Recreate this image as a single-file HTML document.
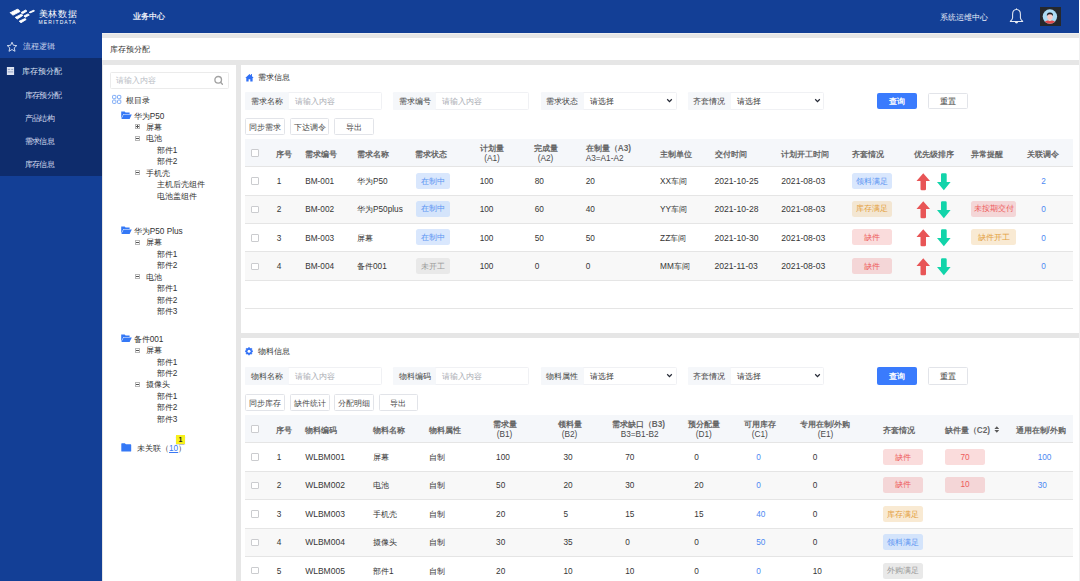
<!DOCTYPE html><html><head><meta charset="utf-8"><style>
html,body{margin:0;padding:0;}
body{width:1080px;height:581px;overflow:hidden;position:relative;background:#f0f0f0;font-family:"Liberation Sans",sans-serif;}
.t{position:absolute;white-space:nowrap;line-height:11px;}
.r{position:absolute;}
svg{position:absolute;overflow:visible;}
</style></head><body>
<div class="r" style="left:102.00px;top:33.00px;width:977.00px;height:548.00px;background:#e6e6e6;"></div>
<div class="r" style="left:0.00px;top:0.00px;width:1079.00px;height:33.00px;background:#133f96;"></div>
<div class="r" style="left:1079.00px;top:0.00px;width:1.00px;height:33.00px;background:#fff;"></div>
<div class="r" style="left:0.00px;top:33.00px;width:102.00px;height:548.00px;background:#133f96;"></div>
<div class="r" style="left:0.00px;top:58.00px;width:102.00px;height:117.50px;background:#0e2c6c;"></div>
<div class="r" style="left:102.00px;top:33.00px;width:977.00px;height:1.00px;background:#f0f0f0;"></div>
<div class="r" style="left:102.00px;top:37.70px;width:977.00px;height:22.00px;background:#fff;"></div>
<div class="t" style="left:109.70px;top:43.90px;color:#333;font-size:8.25px;">库存预分配</div>
<div class="r" style="left:102.50px;top:64.80px;width:133.70px;height:516.20px;background:#fff;"></div>
<div class="r" style="left:240.50px;top:64.80px;width:838.50px;height:268.20px;background:#fff;"></div>
<div class="r" style="left:240.50px;top:338.00px;width:838.50px;height:243.00px;background:#fff;"></div>
<svg style="left:0;top:0" width="40" height="30" viewBox="0 0 40 30">
<g fill="#fff" stroke="#fff" stroke-width="0.9" stroke-linejoin="round">
<polygon points="10.2,12.6 11.4,12.2 17.3,9.3 18.4,9.5 20.0,11.5 13.1,15.1 12.0,14.5"/>
<polygon points="21.1,12.5 25.6,10.1 26.9,11.1 22.5,13.8"/>
<polygon points="29.2,12.3 33.7,10.2 34.5,11.0 30.0,12.9"/>
<polygon points="15.2,17.4 21.3,14.2 22.8,15.4 17.3,19.0"/>
<polygon points="23.9,16.0 28.1,13.9 29.3,15.0 25.3,17.3"/>
<polygon points="19.2,21.2 25.0,18.6 26.2,19.5 21.0,22.7"/>
</g></svg>
<div class="t" style="left:38.6px;top:8.2px;font-size:9px;line-height:12px;color:#fff;letter-spacing:0.75px;">美林数据</div>
<div class="t" style="left:38.6px;top:18.9px;font-size:5px;line-height:6px;color:#fff;letter-spacing:1.1px;">MERITDATA</div>
<div class="t" style="left:132.70px;top:10.90px;color:#e4e9f5;font-size:8.25px;font-weight:bold;">业务中心</div>
<div class="t" style="left:940.20px;top:12.10px;color:#e8edf8;font-size:8.25px;">系统运维中心</div>
<svg style="left:1008px;top:7px" width="17" height="19" viewBox="0 0 17 19">
<path d="M8.5 2.4 C5.7 2.4 4.6 4.6 4.6 7.2 L4.6 10.8 C4.6 12.4 3.4 13.4 2.3 14.4 L14.7 14.4 C13.6 13.4 12.4 12.4 12.4 10.8 L12.4 7.2 C12.4 4.6 11.3 2.4 8.5 2.4 Z" fill="none" stroke="#e6eaf2" stroke-width="1.05" stroke-linejoin="round"/>
<path d="M7.6 2.6 L8.5 0.9 L9.4 2.6 Z" fill="#e6eaf2"/>
<path d="M6.9 14.8 A1.6 1.6 0 0 0 10.1 14.8 Z" fill="#e6eaf2"/>
</svg>
<div class="r" style="left:1040.00px;top:7.40px;width:21.00px;height:18.40px;background:#26282c;"></div>
<svg style="left:1040px;top:7.4px" width="21" height="18.4" viewBox="0 0 21 18.4">
<defs><clipPath id="cc"><circle cx="9.9" cy="9.55" r="7.2"/></clipPath></defs>
<circle cx="9.9" cy="9.55" r="7.2" fill="#acdcf5"/>
<g clip-path="url(#cc)">
<path d="M3 18 Q3.6 13.4 9.9 13.2 Q16.2 13.4 16.8 18 Z" fill="#e04a4c"/>
<path d="M8.4 11.5 H11.4 V13.6 Q9.9 14.4 8.4 13.6 Z" fill="#d9e6dc"/>
<ellipse cx="9.95" cy="9.5" rx="2.8" ry="3.3" fill="#f4cbc6"/>
<path d="M6.9 9.2 Q6.4 5.4 9.95 5.5 Q13.5 5.4 13.0 9.2 Q12.6 7.1 9.95 7.2 Q7.3 7.1 6.9 9.2 Z" fill="#1d1d21"/>
</g></svg>
<svg style="left:6px;top:41px" width="12" height="12" viewBox="0 0 12 12">
<path d="M6 1.2 L7.4 4.3 L10.8 4.6 L8.2 6.9 L9 10.3 L6 8.5 L3 10.3 L3.8 6.9 L1.2 4.6 L4.6 4.3 Z" fill="none" stroke="#dfe6f5" stroke-width="0.9" stroke-linejoin="round"/>
</svg>
<div class="t" style="left:22.70px;top:41.40px;color:#c8d3ec;font-size:8.25px;">流程逻辑</div>
<svg style="left:6px;top:66px" width="10" height="10" viewBox="0 0 10 10">
<rect x="0.9" y="1" width="7.2" height="8" fill="#dfe5f2"/>
<path d="M1.8 3.4 H4.2 M5.2 3.4 H7.2 M1.8 5.9 H7.2" stroke="#7d8fb8" stroke-width="0.8"/>
</svg>
<div class="t" style="left:22.30px;top:66.40px;color:#dce3f2;font-size:8.25px;">库存预分配</div>
<div class="t" style="left:24.70px;top:90.40px;color:#d5dcef;font-size:8.25px;letter-spacing:-0.6px">库存预分配</div>
<div class="t" style="left:24.70px;top:113.40px;color:#d5dcef;font-size:8.25px;letter-spacing:-0.6px">产品结构</div>
<div class="t" style="left:24.70px;top:136.40px;color:#d5dcef;font-size:8.25px;letter-spacing:-0.6px">需求信息</div>
<div class="t" style="left:24.70px;top:159.40px;color:#d5dcef;font-size:8.25px;letter-spacing:-0.6px">库存信息</div>
<div class="r" style="left:110.00px;top:72.30px;width:119.00px;height:16.70px;background:#fff;border:1px solid #ebebeb;box-sizing:border-box;border-radius:1.5px;"></div>
<div class="t" style="left:115.70px;top:75.40px;color:#b8bcc4;font-size:8.25px;">请输入内容</div>
<svg style="left:213px;top:75px" width="12" height="12" viewBox="0 0 12 12">
<circle cx="5.2" cy="4.8" r="3.3" fill="none" stroke="#a2a2a2" stroke-width="1.35"/>
<path d="M7.6 7.3 L9.4 9.2" stroke="#a2a2a2" stroke-width="1.35" stroke-linecap="round"/>
</svg>
<svg style="left:111px;top:94px" width="12" height="11" viewBox="0 0 12 11">
<g fill="none" stroke="#78a8f6" stroke-width="0.95">
<rect x="1.6" y="1.4" width="3.3" height="3.3" rx="0.7"/>
<rect x="6.5" y="1.4" width="3.3" height="3.3" rx="0.7"/>
<rect x="1.6" y="6.1" width="3.3" height="3.3" rx="0.7"/>
<rect x="6.5" y="6.1" width="3.3" height="3.3" rx="0.7"/>
</g></svg>
<div class="t" style="left:125.70px;top:95.40px;color:#333;font-size:8.25px;">根目录</div>
<svg style="left:121px;top:111px" width="11" height="9" viewBox="0 0 11 9">
<path d="M0.2 0.4 H3.6 L4.6 1.4 H8.6 V3 H2.4 L0.2 7.6 Z" fill="#3478f6"/>
<path d="M2.6 3.6 H10.8 L8.6 8 H0.4 Z" fill="#3478f6"/>
</svg>
<div class="t" style="left:133.70px;top:111.40px;color:#333;font-size:8.25px;">华为P50</div>
<svg style="left:135px;top:124px" width="5" height="5" viewBox="0 0 5 5">
<rect x="0.5" y="0.5" width="4" height="4" fill="none" stroke="#b8b8b8" stroke-width="1"/>
<path d="M1 2.5 H4" stroke="#555" stroke-width="1"/><path d="M2.5 1 V4" stroke="#555" stroke-width="1"/></svg>
<div class="t" style="left:145.70px;top:122.40px;color:#333;font-size:8.25px;">屏幕</div>
<svg style="left:135px;top:136px" width="5" height="5" viewBox="0 0 5 5">
<rect x="0.5" y="0.5" width="4" height="4" fill="none" stroke="#b8b8b8" stroke-width="1"/>
<path d="M1 2.5 H4" stroke="#555" stroke-width="1"/></svg>
<div class="t" style="left:145.70px;top:133.40px;color:#333;font-size:8.25px;">电池</div>
<div class="t" style="left:156.70px;top:145.40px;color:#333;font-size:8.25px;">部件1</div>
<div class="t" style="left:156.70px;top:156.40px;color:#333;font-size:8.25px;">部件2</div>
<svg style="left:135px;top:170px" width="5" height="5" viewBox="0 0 5 5">
<rect x="0.5" y="0.5" width="4" height="4" fill="none" stroke="#b8b8b8" stroke-width="1"/>
<path d="M1 2.5 H4" stroke="#555" stroke-width="1"/></svg>
<div class="t" style="left:145.70px;top:168.40px;color:#333;font-size:8.25px;">手机壳</div>
<div class="t" style="left:156.70px;top:179.40px;color:#333;font-size:8.25px;">主机后壳组件</div>
<div class="t" style="left:156.70px;top:191.40px;color:#333;font-size:8.25px;">电池盖组件</div>
<svg style="left:121px;top:226px" width="11" height="9" viewBox="0 0 11 9">
<path d="M0.2 0.4 H3.6 L4.6 1.4 H8.6 V3 H2.4 L0.2 7.6 Z" fill="#3478f6"/>
<path d="M2.6 3.6 H10.8 L8.6 8 H0.4 Z" fill="#3478f6"/>
</svg>
<div class="t" style="left:133.70px;top:226.40px;color:#333;font-size:8.25px;">华为P50 Plus</div>
<svg style="left:135px;top:240px" width="5" height="5" viewBox="0 0 5 5">
<rect x="0.5" y="0.5" width="4" height="4" fill="none" stroke="#b8b8b8" stroke-width="1"/>
<path d="M1 2.5 H4" stroke="#555" stroke-width="1"/></svg>
<div class="t" style="left:145.70px;top:237.40px;color:#333;font-size:8.25px;">屏幕</div>
<div class="t" style="left:156.70px;top:248.90px;color:#333;font-size:8.25px;">部件1</div>
<div class="t" style="left:156.70px;top:260.40px;color:#333;font-size:8.25px;">部件2</div>
<svg style="left:135px;top:274px" width="5" height="5" viewBox="0 0 5 5">
<rect x="0.5" y="0.5" width="4" height="4" fill="none" stroke="#b8b8b8" stroke-width="1"/>
<path d="M1 2.5 H4" stroke="#555" stroke-width="1"/></svg>
<div class="t" style="left:145.70px;top:271.90px;color:#333;font-size:8.25px;">电池</div>
<div class="t" style="left:156.70px;top:283.40px;color:#333;font-size:8.25px;">部件1</div>
<div class="t" style="left:156.70px;top:294.90px;color:#333;font-size:8.25px;">部件2</div>
<div class="t" style="left:156.70px;top:306.40px;color:#333;font-size:8.25px;">部件3</div>
<svg style="left:121px;top:334px" width="11" height="9" viewBox="0 0 11 9">
<path d="M0.2 0.4 H3.6 L4.6 1.4 H8.6 V3 H2.4 L0.2 7.6 Z" fill="#3478f6"/>
<path d="M2.6 3.6 H10.8 L8.6 8 H0.4 Z" fill="#3478f6"/>
</svg>
<div class="t" style="left:133.70px;top:334.40px;color:#333;font-size:8.25px;">备件001</div>
<svg style="left:135px;top:348px" width="5" height="5" viewBox="0 0 5 5">
<rect x="0.5" y="0.5" width="4" height="4" fill="none" stroke="#b8b8b8" stroke-width="1"/>
<path d="M1 2.5 H4" stroke="#555" stroke-width="1"/></svg>
<div class="t" style="left:145.70px;top:345.40px;color:#333;font-size:8.25px;">屏幕</div>
<div class="t" style="left:156.70px;top:356.90px;color:#333;font-size:8.25px;">部件1</div>
<div class="t" style="left:156.70px;top:368.40px;color:#333;font-size:8.25px;">部件2</div>
<svg style="left:135px;top:382px" width="5" height="5" viewBox="0 0 5 5">
<rect x="0.5" y="0.5" width="4" height="4" fill="none" stroke="#b8b8b8" stroke-width="1"/>
<path d="M1 2.5 H4" stroke="#555" stroke-width="1"/></svg>
<div class="t" style="left:145.70px;top:379.40px;color:#333;font-size:8.25px;">摄像头</div>
<div class="t" style="left:156.70px;top:391.40px;color:#333;font-size:8.25px;">部件1</div>
<div class="t" style="left:156.70px;top:402.40px;color:#333;font-size:8.25px;">部件2</div>
<div class="t" style="left:156.70px;top:413.90px;color:#333;font-size:8.25px;">部件3</div>
<div class="r" style="left:176.00px;top:435.00px;width:9.00px;height:8.50px;background:#f7f01c;box-shadow:0 0.5px 1px rgba(0,0,0,0.25);"></div>
<div class="t" style="left:176px;width:9px;text-align:center;top:433.5px;font-size:7px;font-weight:bold;color:#222">1</div>
<svg style="left:121px;top:443px" width="11" height="9" viewBox="0 0 11 9">
<path d="M0.3 0.8 Q0.3 0.2 0.9 0.2 H3.8 L4.9 1.3 H9.6 Q10.2 1.3 10.2 1.9 V7.9 Q10.2 8.5 9.6 8.5 H0.9 Q0.3 8.5 0.3 7.9 Z" fill="#3478f6"/>
</svg>
<div class="t" style="left:137px;top:443px;color:#333;font-size:8.25px">未关联（<span style="color:#3a78f2;text-decoration:underline">10</span>）</div>
<svg style="left:245px;top:72.5px" width="9" height="9" viewBox="0 0 9 9">
<path d="M4.5 0.9 L0.3 4.9 L1.3 4.9 L1.3 8.6 L3.6 8.6 L3.6 6.3 L5.3 6.3 L5.3 8.6 L7.6 8.6 L7.6 4.9 L8.7 4.9 L7.0 3.2 L7.0 0.9 L6.1 0.9 L6.1 2.4 Z" fill="#2f6ff5"/>
</svg>
<div class="t" style="left:257.70px;top:71.90px;color:#333;font-size:8.25px;">需求信息</div>
<div class="r" style="left:245.00px;top:92.30px;width:136.50px;height:17.40px;background:#fff;border:1px solid #f0f1f4;box-sizing:border-box;border-radius:1.5px;"></div>
<div class="r" style="left:245.00px;top:92.30px;width:44.00px;height:17.40px;background:#f5f7fa;border-radius:1.5px;"></div>
<div class="t" style="left:245.00px;width:44.00px;text-align:center;top:95.75px;color:#444;font-size:8.25px;">需求名称</div>
<div class="t" style="left:294.70px;top:95.90px;color:#a9acb3;font-size:8.25px;">请输入内容</div>
<div class="r" style="left:393.00px;top:92.30px;width:135.50px;height:17.40px;background:#fff;border:1px solid #f0f1f4;box-sizing:border-box;border-radius:1.5px;"></div>
<div class="r" style="left:393.00px;top:92.30px;width:43.00px;height:17.40px;background:#f5f7fa;border-radius:1.5px;"></div>
<div class="t" style="left:393.00px;width:43.00px;text-align:center;top:95.75px;color:#444;font-size:8.25px;">需求编号</div>
<div class="t" style="left:441.70px;top:95.90px;color:#a9acb3;font-size:8.25px;">请输入内容</div>
<div class="r" style="left:540.50px;top:92.30px;width:136.00px;height:17.40px;background:#fff;border:1px solid #f0f1f4;box-sizing:border-box;border-radius:1.5px;"></div>
<div class="r" style="left:540.50px;top:92.30px;width:43.50px;height:17.40px;background:#f5f7fa;border-radius:1.5px;"></div>
<div class="t" style="left:540.50px;width:43.50px;text-align:center;top:95.75px;color:#444;font-size:8.25px;">需求状态</div>
<div class="t" style="left:590.20px;top:95.90px;color:#333;font-size:8.25px;">请选择</div>
<svg style="left:666px;top:98px" width="7" height="5" viewBox="0 0 7 5">
<path d="M1.2 1.3 L3.5 3.6 L5.8 1.3" fill="none" stroke="#262a36" stroke-width="1.25"/>
</svg>
<div class="r" style="left:687.50px;top:92.30px;width:136.30px;height:17.40px;background:#fff;border:1px solid #f0f1f4;box-sizing:border-box;border-radius:1.5px;"></div>
<div class="r" style="left:687.50px;top:92.30px;width:43.50px;height:17.40px;background:#f5f7fa;border-radius:1.5px;"></div>
<div class="t" style="left:687.50px;width:43.50px;text-align:center;top:95.75px;color:#444;font-size:8.25px;">齐套情况</div>
<div class="t" style="left:737.20px;top:95.90px;color:#333;font-size:8.25px;">请选择</div>
<svg style="left:814px;top:98px" width="7" height="5" viewBox="0 0 7 5">
<path d="M1.2 1.3 L3.5 3.6 L5.8 1.3" fill="none" stroke="#262a36" stroke-width="1.25"/>
</svg>
<div class="r" style="left:877.00px;top:93.00px;width:40.00px;height:15.80px;background:#3a7bfd;border-radius:2px;"></div>
<div class="t" style="left:877.00px;width:40.00px;text-align:center;top:96.05px;color:#fff;font-size:8.25px;font-weight:bold;">查询</div>
<div class="r" style="left:928.30px;top:93.00px;width:39.30px;height:15.80px;background:#fff;border:1px solid #e2e4e9;box-sizing:border-box;border-radius:1.5px;"></div>
<div class="t" style="left:928.30px;width:39.30px;text-align:center;top:96.25px;color:#333;font-size:8.25px;">重置</div>
<div class="r" style="left:245.00px;top:118.00px;width:39.50px;height:16.50px;background:#fff;border:1px solid #e2e4e9;box-sizing:border-box;border-radius:1.5px;"></div>
<div class="t" style="left:245.00px;width:39.50px;text-align:center;top:121.60px;color:#4a4a4a;font-size:8.25px;">同步需求</div>
<div class="r" style="left:290.00px;top:118.00px;width:39.20px;height:16.50px;background:#fff;border:1px solid #e2e4e9;box-sizing:border-box;border-radius:1.5px;"></div>
<div class="t" style="left:290.00px;width:39.20px;text-align:center;top:121.60px;color:#4a4a4a;font-size:8.25px;">下达调令</div>
<div class="r" style="left:334.00px;top:118.00px;width:39.50px;height:16.50px;background:#fff;border:1px solid #e2e4e9;box-sizing:border-box;border-radius:1.5px;"></div>
<div class="t" style="left:334.00px;width:39.50px;text-align:center;top:121.60px;color:#4a4a4a;font-size:8.25px;">导出</div>
<div class="r" style="left:245.00px;top:139.00px;width:828.00px;height:27.50px;background:#f5f7fa;"></div>
<div class="r" style="left:245.00px;top:166.00px;width:828.00px;height:1.00px;background:#e5e5e5;"></div>
<div class="r" style="left:251.20px;top:149.05px;width:7.60px;height:7.50px;background:#fff;border:1px solid #cbcccf;box-sizing:border-box;border-radius:1px;"></div>
<div class="t" style="left:276.20px;top:149.00px;color:#666666;font-size:8.25px;font-weight:bold;">序号</div>
<div class="t" style="left:305.20px;top:149.00px;color:#666666;font-size:8.25px;font-weight:bold;">需求编号</div>
<div class="t" style="left:357.00px;top:149.00px;color:#666666;font-size:8.25px;font-weight:bold;">需求名称</div>
<div class="t" style="left:415.30px;top:149.00px;color:#666666;font-size:8.25px;font-weight:bold;">需求状态</div>
<div class="t" style="left:660.10px;top:149.00px;color:#666666;font-size:8.25px;font-weight:bold;">主制单位</div>
<div class="t" style="left:714.50px;top:149.00px;color:#666666;font-size:8.25px;font-weight:bold;">交付时间</div>
<div class="t" style="left:781.30px;top:149.00px;color:#666666;font-size:8.25px;font-weight:bold;">计划开工时间</div>
<div class="t" style="left:851.70px;top:149.00px;color:#666666;font-size:8.25px;font-weight:bold;">齐套情况</div>
<div class="t" style="left:913.70px;top:149.00px;color:#666666;font-size:8.25px;font-weight:bold;">优先级排序</div>
<div class="t" style="left:970.70px;top:149.00px;color:#666666;font-size:8.25px;font-weight:bold;">异常提醒</div>
<div class="t" style="left:1026.70px;top:149.00px;color:#666666;font-size:8.25px;font-weight:bold;">关联调令</div>
<div class="t" style="left:479.70px;top:142.90px;color:#666666;font-size:8.25px;font-weight:bold;">计划量</div>
<div class="t" style="left:484.20px;top:152.90px;color:#4a4a4a;font-size:8.25px;">(A1)</div>
<div class="t" style="left:534.20px;top:142.90px;color:#666666;font-size:8.25px;font-weight:bold;">完成量</div>
<div class="t" style="left:537.70px;top:152.90px;color:#4a4a4a;font-size:8.25px;">(A2)</div>
<div class="t" style="left:585.70px;top:142.90px;color:#666666;font-size:8.25px;font-weight:bold;">在制量（A3)</div>
<div class="t" style="left:585.70px;top:152.90px;color:#4a4a4a;font-size:8.25px;">A3=A1-A2</div>
<div class="r" style="left:245.00px;top:194.70px;width:828.00px;height:1.00px;background:#e5e5e5;"></div>
<div class="r" style="left:251.20px;top:177.30px;width:7.60px;height:7.50px;background:#fff;border:1px solid #cbcccf;box-sizing:border-box;border-radius:1px;"></div>
<div class="t" style="left:276.70px;top:175.95px;color:#363636;font-size:8.25px;">1</div>
<div class="t" style="left:305.20px;top:175.95px;color:#363636;font-size:8.25px;">BM-001</div>
<div class="t" style="left:357.00px;top:175.95px;color:#363636;font-size:8.25px;">华为P50</div>
<div class="r" style="left:416.00px;top:173.35px;width:33.50px;height:16.00px;background:#d9e7fd;border-radius:2.5px;"></div>
<div class="t" style="left:416.00px;width:33.50px;text-align:center;top:176.10px;color:#5b95f2;font-size:8.25px;">在制中</div>
<div class="t" style="left:479.70px;top:175.95px;color:#363636;font-size:8.25px;">100</div>
<div class="t" style="left:534.70px;top:175.95px;color:#363636;font-size:8.25px;">80</div>
<div class="t" style="left:585.70px;top:175.95px;color:#363636;font-size:8.25px;">20</div>
<div class="t" style="left:660.10px;top:175.95px;color:#363636;font-size:8.25px;">XX车间</div>
<div class="t" style="left:714.50px;top:175.95px;color:#363636;font-size:8.6px;">2021-10-25</div>
<div class="t" style="left:781.30px;top:175.95px;color:#363636;font-size:8.6px;">2021-08-03</div>
<div class="r" style="left:852.00px;top:173.35px;width:40.00px;height:16.00px;background:#d9e7fd;border-radius:2.5px;"></div>
<div class="t" style="left:852.00px;width:40.00px;text-align:center;top:176.10px;color:#5b95f2;font-size:8.25px;">领料满足</div>
<svg style="left:916px;top:172.55px" width="36" height="18" viewBox="0 0 36 18">
<path d="M7.25 0.3 L14 7.9 L10.0 7.9 L10.0 15.9 Q10.0 17.2 8.7 17.2 L5.8 17.2 Q4.5 17.2 4.5 15.9 L4.5 7.9 L0.5 7.9 Z" fill="#e85556"/>
<path d="M26.3 0.3 L29.4 0.3 Q30.7 0.3 30.7 1.6 L30.7 9.0 L34.6 9.0 L27.85 17.3 L21.0 9.0 L25.0 9.0 L25.0 1.6 Q25.0 0.3 26.3 0.3 Z" fill="#12d4aa"/>
</svg>
<div class="t" style="left:1041.20px;top:175.95px;color:#4d89f2;font-size:8.25px;">2</div>
<div class="r" style="left:245.00px;top:195.70px;width:828.00px;height:27.30px;background:#f8f8f8;"></div>
<div class="r" style="left:245.00px;top:223.00px;width:828.00px;height:1.00px;background:#e5e5e5;"></div>
<div class="r" style="left:251.20px;top:205.80px;width:7.60px;height:7.50px;background:#fff;border:1px solid #cbcccf;box-sizing:border-box;border-radius:1px;"></div>
<div class="t" style="left:276.70px;top:204.45px;color:#363636;font-size:8.25px;">2</div>
<div class="t" style="left:305.20px;top:204.45px;color:#363636;font-size:8.25px;">BM-002</div>
<div class="t" style="left:357.00px;top:204.45px;color:#363636;font-size:8.25px;">华为P50plus</div>
<div class="r" style="left:416.00px;top:200.55px;width:33.50px;height:16.00px;background:#d4e4fb;border-radius:2.5px;"></div>
<div class="t" style="left:416.00px;width:33.50px;text-align:center;top:203.30px;color:#5b95f2;font-size:8.25px;">在制中</div>
<div class="t" style="left:479.70px;top:204.45px;color:#363636;font-size:8.25px;">100</div>
<div class="t" style="left:534.70px;top:204.45px;color:#363636;font-size:8.25px;">60</div>
<div class="t" style="left:585.70px;top:204.45px;color:#363636;font-size:8.25px;">40</div>
<div class="t" style="left:660.10px;top:204.45px;color:#363636;font-size:8.25px;">YY车间</div>
<div class="t" style="left:714.50px;top:204.45px;color:#363636;font-size:8.6px;">2021-10-28</div>
<div class="t" style="left:781.30px;top:204.45px;color:#363636;font-size:8.6px;">2021-08-03</div>
<div class="r" style="left:852.00px;top:200.55px;width:40.00px;height:16.00px;background:#f3e6d2;border-radius:2.5px;"></div>
<div class="t" style="left:852.00px;width:40.00px;text-align:center;top:203.30px;color:#e3a040;font-size:8.25px;">库存满足</div>
<svg style="left:916px;top:201.05px" width="36" height="18" viewBox="0 0 36 18">
<path d="M7.25 0.3 L14 7.9 L10.0 7.9 L10.0 15.9 Q10.0 17.2 8.7 17.2 L5.8 17.2 Q4.5 17.2 4.5 15.9 L4.5 7.9 L0.5 7.9 Z" fill="#e85556"/>
<path d="M26.3 0.3 L29.4 0.3 Q30.7 0.3 30.7 1.6 L30.7 9.0 L34.6 9.0 L27.85 17.3 L21.0 9.0 L25.0 9.0 L25.0 1.6 Q25.0 0.3 26.3 0.3 Z" fill="#12d4aa"/>
</svg>
<div class="r" style="left:971.20px;top:200.55px;width:45.10px;height:16.00px;background:#f4d6d7;border-radius:2.5px;"></div>
<div class="t" style="left:971.20px;width:45.10px;text-align:center;top:203.30px;color:#ee5b5b;font-size:8.25px;">未按期交付</div>
<div class="t" style="left:1041.20px;top:204.45px;color:#4d89f2;font-size:8.25px;">0</div>
<div class="r" style="left:245.00px;top:251.30px;width:828.00px;height:1.00px;background:#e5e5e5;"></div>
<div class="r" style="left:251.20px;top:234.10px;width:7.60px;height:7.50px;background:#fff;border:1px solid #cbcccf;box-sizing:border-box;border-radius:1px;"></div>
<div class="t" style="left:276.70px;top:232.75px;color:#363636;font-size:8.25px;">3</div>
<div class="t" style="left:305.20px;top:232.75px;color:#363636;font-size:8.25px;">BM-003</div>
<div class="t" style="left:357.00px;top:232.75px;color:#363636;font-size:8.25px;">屏幕</div>
<div class="r" style="left:416.00px;top:229.35px;width:33.50px;height:16.00px;background:#d9e7fd;border-radius:2.5px;"></div>
<div class="t" style="left:416.00px;width:33.50px;text-align:center;top:232.10px;color:#5b95f2;font-size:8.25px;">在制中</div>
<div class="t" style="left:479.70px;top:232.75px;color:#363636;font-size:8.25px;">100</div>
<div class="t" style="left:534.70px;top:232.75px;color:#363636;font-size:8.25px;">50</div>
<div class="t" style="left:585.70px;top:232.75px;color:#363636;font-size:8.25px;">50</div>
<div class="t" style="left:660.10px;top:232.75px;color:#363636;font-size:8.25px;">ZZ车间</div>
<div class="t" style="left:714.50px;top:232.75px;color:#363636;font-size:8.6px;">2021-10-30</div>
<div class="t" style="left:781.30px;top:232.75px;color:#363636;font-size:8.6px;">2021-08-03</div>
<div class="r" style="left:852.00px;top:229.35px;width:40.00px;height:16.00px;background:#fadcdc;border-radius:2.5px;"></div>
<div class="t" style="left:852.00px;width:40.00px;text-align:center;top:232.10px;color:#ee5b5b;font-size:8.25px;">缺件</div>
<svg style="left:916px;top:229.35px" width="36" height="18" viewBox="0 0 36 18">
<path d="M7.25 0.3 L14 7.9 L10.0 7.9 L10.0 15.9 Q10.0 17.2 8.7 17.2 L5.8 17.2 Q4.5 17.2 4.5 15.9 L4.5 7.9 L0.5 7.9 Z" fill="#e85556"/>
<path d="M26.3 0.3 L29.4 0.3 Q30.7 0.3 30.7 1.6 L30.7 9.0 L34.6 9.0 L27.85 17.3 L21.0 9.0 L25.0 9.0 L25.0 1.6 Q25.0 0.3 26.3 0.3 Z" fill="#12d4aa"/>
</svg>
<div class="r" style="left:971.20px;top:229.35px;width:45.10px;height:16.00px;background:#f9ead3;border-radius:2.5px;"></div>
<div class="t" style="left:971.20px;width:45.10px;text-align:center;top:232.10px;color:#e3a040;font-size:8.25px;">缺件开工</div>
<div class="t" style="left:1041.20px;top:232.75px;color:#4d89f2;font-size:8.25px;">0</div>
<div class="r" style="left:245.00px;top:252.30px;width:828.00px;height:27.50px;background:#f8f8f8;"></div>
<div class="r" style="left:245.00px;top:279.80px;width:828.00px;height:1.00px;background:#e5e5e5;"></div>
<div class="r" style="left:251.20px;top:262.50px;width:7.60px;height:7.50px;background:#fff;border:1px solid #cbcccf;box-sizing:border-box;border-radius:1px;"></div>
<div class="t" style="left:276.70px;top:261.15px;color:#363636;font-size:8.25px;">4</div>
<div class="t" style="left:305.20px;top:261.15px;color:#363636;font-size:8.25px;">BM-004</div>
<div class="t" style="left:357.00px;top:261.15px;color:#363636;font-size:8.25px;">备件001</div>
<div class="r" style="left:416.00px;top:258.05px;width:33.50px;height:16.00px;background:#e9e9e9;border-radius:2.5px;"></div>
<div class="t" style="left:416.00px;width:33.50px;text-align:center;top:260.80px;color:#9a9a9a;font-size:8.25px;">未开工</div>
<div class="t" style="left:479.70px;top:261.15px;color:#363636;font-size:8.25px;">100</div>
<div class="t" style="left:534.70px;top:261.15px;color:#363636;font-size:8.25px;">0</div>
<div class="t" style="left:585.70px;top:261.15px;color:#363636;font-size:8.25px;">0</div>
<div class="t" style="left:660.10px;top:261.15px;color:#363636;font-size:8.25px;">MM车间</div>
<div class="t" style="left:714.50px;top:261.15px;color:#363636;font-size:8.6px;">2021-11-03</div>
<div class="t" style="left:781.30px;top:261.15px;color:#363636;font-size:8.6px;">2021-08-03</div>
<div class="r" style="left:852.00px;top:258.05px;width:40.00px;height:16.00px;background:#f4d6d7;border-radius:2.5px;"></div>
<div class="t" style="left:852.00px;width:40.00px;text-align:center;top:260.80px;color:#ee5b5b;font-size:8.25px;">缺件</div>
<svg style="left:916px;top:257.75px" width="36" height="18" viewBox="0 0 36 18">
<path d="M7.25 0.3 L14 7.9 L10.0 7.9 L10.0 15.9 Q10.0 17.2 8.7 17.2 L5.8 17.2 Q4.5 17.2 4.5 15.9 L4.5 7.9 L0.5 7.9 Z" fill="#e85556"/>
<path d="M26.3 0.3 L29.4 0.3 Q30.7 0.3 30.7 1.6 L30.7 9.0 L34.6 9.0 L27.85 17.3 L21.0 9.0 L25.0 9.0 L25.0 1.6 Q25.0 0.3 26.3 0.3 Z" fill="#12d4aa"/>
</svg>
<div class="t" style="left:1041.20px;top:261.15px;color:#4d89f2;font-size:8.25px;">0</div>
<div class="r" style="left:245.00px;top:308.00px;width:828.00px;height:1.00px;background:#e5e5e5;"></div>
<svg style="left:245px;top:347px" width="9" height="9" viewBox="0 0 9 9">
<polygon points="4.00,0.25 5.11,1.57 6.83,1.42 6.68,3.14 8.00,4.25 6.68,5.36 6.83,7.08 5.11,6.93 4.00,8.25 2.89,6.93 1.17,7.08 1.32,5.36 0.00,4.25 1.32,3.14 1.17,1.42 2.89,1.57" fill="#2f6ff5" stroke="#2f6ff5" stroke-width="0.6" stroke-linejoin="round"/>
<circle cx="4.0" cy="4.25" r="1.5" fill="#fff"/>
</svg>
<div class="t" style="left:257.70px;top:346.40px;color:#333;font-size:8.25px;">物料信息</div>
<div class="r" style="left:245.00px;top:367.00px;width:136.50px;height:17.60px;background:#fff;border:1px solid #f0f1f4;box-sizing:border-box;border-radius:1.5px;"></div>
<div class="r" style="left:245.00px;top:367.00px;width:44.00px;height:17.60px;background:#f5f7fa;border-radius:1.5px;"></div>
<div class="t" style="left:245.00px;width:44.00px;text-align:center;top:370.55px;color:#444;font-size:8.25px;">物料名称</div>
<div class="t" style="left:294.70px;top:370.70px;color:#a9acb3;font-size:8.25px;">请输入内容</div>
<div class="r" style="left:393.00px;top:367.00px;width:135.50px;height:17.60px;background:#fff;border:1px solid #f0f1f4;box-sizing:border-box;border-radius:1.5px;"></div>
<div class="r" style="left:393.00px;top:367.00px;width:43.00px;height:17.60px;background:#f5f7fa;border-radius:1.5px;"></div>
<div class="t" style="left:393.00px;width:43.00px;text-align:center;top:370.55px;color:#444;font-size:8.25px;">物料编码</div>
<div class="t" style="left:441.70px;top:370.70px;color:#a9acb3;font-size:8.25px;">请输入内容</div>
<div class="r" style="left:540.50px;top:367.00px;width:136.00px;height:17.60px;background:#fff;border:1px solid #f0f1f4;box-sizing:border-box;border-radius:1.5px;"></div>
<div class="r" style="left:540.50px;top:367.00px;width:43.50px;height:17.60px;background:#f5f7fa;border-radius:1.5px;"></div>
<div class="t" style="left:540.50px;width:43.50px;text-align:center;top:370.55px;color:#444;font-size:8.25px;">物料属性</div>
<div class="t" style="left:590.20px;top:370.70px;color:#333;font-size:8.25px;">请选择</div>
<svg style="left:666px;top:373px" width="7" height="5" viewBox="0 0 7 5">
<path d="M1.2 1.3 L3.5 3.6 L5.8 1.3" fill="none" stroke="#262a36" stroke-width="1.25"/>
</svg>
<div class="r" style="left:687.50px;top:367.00px;width:136.30px;height:17.60px;background:#fff;border:1px solid #f0f1f4;box-sizing:border-box;border-radius:1.5px;"></div>
<div class="r" style="left:687.50px;top:367.00px;width:43.50px;height:17.60px;background:#f5f7fa;border-radius:1.5px;"></div>
<div class="t" style="left:687.50px;width:43.50px;text-align:center;top:370.55px;color:#444;font-size:8.25px;">齐套情况</div>
<div class="t" style="left:737.20px;top:370.70px;color:#333;font-size:8.25px;">请选择</div>
<svg style="left:814px;top:373px" width="7" height="5" viewBox="0 0 7 5">
<path d="M1.2 1.3 L3.5 3.6 L5.8 1.3" fill="none" stroke="#262a36" stroke-width="1.25"/>
</svg>
<div class="r" style="left:877.00px;top:366.80px;width:40.00px;height:17.90px;background:#3a7bfd;border-radius:2px;"></div>
<div class="t" style="left:877.00px;width:40.00px;text-align:center;top:370.90px;color:#fff;font-size:8.25px;font-weight:bold;">查询</div>
<div class="r" style="left:928.00px;top:366.80px;width:39.60px;height:17.90px;background:#fff;border:1px solid #e2e4e9;box-sizing:border-box;border-radius:1.5px;"></div>
<div class="t" style="left:928.00px;width:39.60px;text-align:center;top:371.10px;color:#333;font-size:8.25px;">重置</div>
<div class="r" style="left:245.00px;top:394.00px;width:39.50px;height:16.50px;background:#fff;border:1px solid #e2e4e9;box-sizing:border-box;border-radius:1.5px;"></div>
<div class="t" style="left:245.00px;width:39.50px;text-align:center;top:397.60px;color:#4a4a4a;font-size:8.25px;">同步库存</div>
<div class="r" style="left:290.00px;top:394.00px;width:39.50px;height:16.50px;background:#fff;border:1px solid #e2e4e9;box-sizing:border-box;border-radius:1.5px;"></div>
<div class="t" style="left:290.00px;width:39.50px;text-align:center;top:397.60px;color:#4a4a4a;font-size:8.25px;">缺件统计</div>
<div class="r" style="left:334.00px;top:394.00px;width:39.50px;height:16.50px;background:#fff;border:1px solid #e2e4e9;box-sizing:border-box;border-radius:1.5px;"></div>
<div class="t" style="left:334.00px;width:39.50px;text-align:center;top:397.60px;color:#4a4a4a;font-size:8.25px;">分配明细</div>
<div class="r" style="left:378.50px;top:394.00px;width:39.00px;height:16.50px;background:#fff;border:1px solid #e2e4e9;box-sizing:border-box;border-radius:1.5px;"></div>
<div class="t" style="left:378.50px;width:39.00px;text-align:center;top:397.60px;color:#4a4a4a;font-size:8.25px;">导出</div>
<div class="r" style="left:245.00px;top:415.00px;width:828.00px;height:27.50px;background:#f5f7fa;"></div>
<div class="r" style="left:245.00px;top:442.00px;width:828.00px;height:1.00px;background:#e5e5e5;"></div>
<div class="r" style="left:251.20px;top:425.05px;width:7.60px;height:7.50px;background:#fff;border:1px solid #cbcccf;box-sizing:border-box;border-radius:1px;"></div>
<div class="t" style="left:276.30px;top:425.00px;color:#666666;font-size:8.25px;font-weight:bold;">序号</div>
<div class="t" style="left:305.20px;top:425.00px;color:#666666;font-size:8.25px;font-weight:bold;">物料编码</div>
<div class="t" style="left:373.20px;top:425.00px;color:#666666;font-size:8.25px;font-weight:bold;">物料名称</div>
<div class="t" style="left:429.00px;top:425.00px;color:#666666;font-size:8.25px;font-weight:bold;">物料属性</div>
<div class="t" style="left:882.50px;top:425.00px;color:#666666;font-size:8.25px;font-weight:bold;">齐套情况</div>
<div class="t" style="left:1015.50px;top:425.00px;color:#666666;font-size:8.25px;font-weight:bold;">通用在制/外购</div>
<div class="t" style="left:492.70px;top:418.90px;color:#666666;font-size:8.25px;font-weight:bold;">需求量</div>
<div class="t" style="left:496.70px;top:428.90px;color:#4a4a4a;font-size:8.25px;">(B1)</div>
<div class="t" style="left:558.30px;top:418.90px;color:#666666;font-size:8.25px;font-weight:bold;">领料量</div>
<div class="t" style="left:561.70px;top:428.90px;color:#4a4a4a;font-size:8.25px;">(B2)</div>
<div class="t" style="left:611.70px;top:418.90px;color:#666666;font-size:8.25px;font-weight:bold;">需求缺口（B3)</div>
<div class="t" style="left:620.70px;top:428.90px;color:#4a4a4a;font-size:8.25px;">B3=B1-B2</div>
<div class="t" style="left:688.30px;top:418.90px;color:#666666;font-size:8.25px;font-weight:bold;">预分配量</div>
<div class="t" style="left:695.70px;top:428.90px;color:#4a4a4a;font-size:8.25px;">(D1)</div>
<div class="t" style="left:743.70px;top:418.90px;color:#666666;font-size:8.25px;font-weight:bold;">可用库存</div>
<div class="t" style="left:751.70px;top:428.90px;color:#4a4a4a;font-size:8.25px;">(C1)</div>
<div class="t" style="left:799.70px;top:418.90px;color:#666666;font-size:8.25px;font-weight:bold;">专用在制/外购</div>
<div class="t" style="left:817.70px;top:428.90px;color:#4a4a4a;font-size:8.25px;">(E1)</div>
<div class="t" style="left:944.70px;top:425.00px;color:#666666;font-size:8.25px;font-weight:bold;">缺件量（C2)</div>
<svg style="left:994px;top:425.9px" width="6" height="8" viewBox="0 0 6 8">
<path d="M2.8 0.2 L5.2 2.9 L0.4 2.9 Z M2.8 6.8 L5.2 4.1 L0.4 4.1 Z" fill="#5a5a5a"/>
</svg>
<div class="r" style="left:245.00px;top:470.70px;width:828.00px;height:1.00px;background:#e5e5e5;"></div>
<div class="r" style="left:251.20px;top:453.30px;width:7.60px;height:7.50px;background:#fff;border:1px solid #cbcccf;box-sizing:border-box;border-radius:1px;"></div>
<div class="t" style="left:276.70px;top:451.95px;color:#363636;font-size:8.25px;">1</div>
<div class="t" style="left:305.20px;top:451.95px;color:#363636;font-size:8.5px;">WLBM001</div>
<div class="t" style="left:373.00px;top:451.95px;color:#363636;font-size:8.25px;">屏幕</div>
<div class="t" style="left:429.30px;top:451.95px;color:#363636;font-size:8.25px;">自制</div>
<div class="t" style="left:496.10px;top:451.95px;color:#363636;font-size:8.25px;">100</div>
<div class="t" style="left:563.50px;top:451.95px;color:#363636;font-size:8.25px;">30</div>
<div class="t" style="left:625.20px;top:451.95px;color:#363636;font-size:8.25px;">70</div>
<div class="t" style="left:694.30px;top:451.95px;color:#363636;font-size:8.25px;">0</div>
<div class="t" style="left:756.20px;top:451.95px;color:#4d89f2;font-size:8.25px;">0</div>
<div class="t" style="left:812.70px;top:451.95px;color:#363636;font-size:8.25px;">0</div>
<div class="r" style="left:883.00px;top:449.05px;width:39.50px;height:16.00px;background:#fadcdc;border-radius:2.5px;"></div>
<div class="t" style="left:883.00px;width:39.50px;text-align:center;top:451.80px;color:#ee5b5b;font-size:8.25px;">缺件</div>
<div class="r" style="left:945.00px;top:449.05px;width:40.00px;height:16.00px;background:#fadcdc;border-radius:2.5px;"></div>
<div class="t" style="left:945.00px;width:40.00px;text-align:center;top:451.80px;color:#ee5b5b;font-size:8.25px;">70</div>
<div class="t" style="left:1037.70px;top:451.95px;color:#4d89f2;font-size:8.25px;">100</div>
<div class="r" style="left:245.00px;top:471.70px;width:828.00px;height:27.30px;background:#f8f8f8;"></div>
<div class="r" style="left:245.00px;top:499.00px;width:828.00px;height:1.00px;background:#e5e5e5;"></div>
<div class="r" style="left:251.20px;top:481.80px;width:7.60px;height:7.50px;background:#fff;border:1px solid #cbcccf;box-sizing:border-box;border-radius:1px;"></div>
<div class="t" style="left:276.70px;top:480.45px;color:#363636;font-size:8.25px;">2</div>
<div class="t" style="left:305.20px;top:480.45px;color:#363636;font-size:8.5px;">WLBM002</div>
<div class="t" style="left:373.00px;top:480.45px;color:#363636;font-size:8.25px;">电池</div>
<div class="t" style="left:429.30px;top:480.45px;color:#363636;font-size:8.25px;">自制</div>
<div class="t" style="left:496.10px;top:480.45px;color:#363636;font-size:8.25px;">50</div>
<div class="t" style="left:563.50px;top:480.45px;color:#363636;font-size:8.25px;">20</div>
<div class="t" style="left:625.20px;top:480.45px;color:#363636;font-size:8.25px;">30</div>
<div class="t" style="left:694.30px;top:480.45px;color:#363636;font-size:8.25px;">20</div>
<div class="t" style="left:756.20px;top:480.45px;color:#4d89f2;font-size:8.25px;">0</div>
<div class="t" style="left:812.70px;top:480.45px;color:#363636;font-size:8.25px;">0</div>
<div class="r" style="left:883.00px;top:476.55px;width:39.50px;height:16.00px;background:#f4d6d7;border-radius:2.5px;"></div>
<div class="t" style="left:883.00px;width:39.50px;text-align:center;top:479.30px;color:#ee5b5b;font-size:8.25px;">缺件</div>
<div class="r" style="left:945.00px;top:476.55px;width:40.00px;height:16.00px;background:#f4d6d7;border-radius:2.5px;"></div>
<div class="t" style="left:945.00px;width:40.00px;text-align:center;top:479.30px;color:#ee5b5b;font-size:8.25px;">10</div>
<div class="t" style="left:1037.70px;top:480.45px;color:#4d89f2;font-size:8.25px;">30</div>
<div class="r" style="left:245.00px;top:527.50px;width:828.00px;height:1.00px;background:#e5e5e5;"></div>
<div class="r" style="left:251.20px;top:510.20px;width:7.60px;height:7.50px;background:#fff;border:1px solid #cbcccf;box-sizing:border-box;border-radius:1px;"></div>
<div class="t" style="left:276.70px;top:508.85px;color:#363636;font-size:8.25px;">3</div>
<div class="t" style="left:305.20px;top:508.85px;color:#363636;font-size:8.5px;">WLBM003</div>
<div class="t" style="left:373.00px;top:508.85px;color:#363636;font-size:8.25px;">手机壳</div>
<div class="t" style="left:429.30px;top:508.85px;color:#363636;font-size:8.25px;">自制</div>
<div class="t" style="left:496.10px;top:508.85px;color:#363636;font-size:8.25px;">20</div>
<div class="t" style="left:563.50px;top:508.85px;color:#363636;font-size:8.25px;">5</div>
<div class="t" style="left:625.20px;top:508.85px;color:#363636;font-size:8.25px;">15</div>
<div class="t" style="left:694.30px;top:508.85px;color:#363636;font-size:8.25px;">15</div>
<div class="t" style="left:756.20px;top:508.85px;color:#4d89f2;font-size:8.25px;">40</div>
<div class="t" style="left:812.70px;top:508.85px;color:#363636;font-size:8.25px;">0</div>
<div class="r" style="left:883.00px;top:505.95px;width:39.50px;height:16.00px;background:#f9ead3;border-radius:2.5px;"></div>
<div class="t" style="left:883.00px;width:39.50px;text-align:center;top:508.70px;color:#e3a040;font-size:8.25px;">库存满足</div>
<div class="r" style="left:245.00px;top:528.50px;width:828.00px;height:27.30px;background:#f8f8f8;"></div>
<div class="r" style="left:245.00px;top:555.80px;width:828.00px;height:1.00px;background:#e5e5e5;"></div>
<div class="r" style="left:251.20px;top:538.60px;width:7.60px;height:7.50px;background:#fff;border:1px solid #cbcccf;box-sizing:border-box;border-radius:1px;"></div>
<div class="t" style="left:276.70px;top:537.25px;color:#363636;font-size:8.25px;">4</div>
<div class="t" style="left:305.20px;top:537.25px;color:#363636;font-size:8.5px;">WLBM004</div>
<div class="t" style="left:373.00px;top:537.25px;color:#363636;font-size:8.25px;">摄像头</div>
<div class="t" style="left:429.30px;top:537.25px;color:#363636;font-size:8.25px;">自制</div>
<div class="t" style="left:496.10px;top:537.25px;color:#363636;font-size:8.25px;">30</div>
<div class="t" style="left:563.50px;top:537.25px;color:#363636;font-size:8.25px;">35</div>
<div class="t" style="left:625.20px;top:537.25px;color:#363636;font-size:8.25px;">0</div>
<div class="t" style="left:694.30px;top:537.25px;color:#363636;font-size:8.25px;">0</div>
<div class="t" style="left:756.20px;top:537.25px;color:#4d89f2;font-size:8.25px;">50</div>
<div class="t" style="left:812.70px;top:537.25px;color:#363636;font-size:8.25px;">0</div>
<div class="r" style="left:883.00px;top:534.05px;width:39.50px;height:16.00px;background:#d4e4fb;border-radius:2.5px;"></div>
<div class="t" style="left:883.00px;width:39.50px;text-align:center;top:536.80px;color:#5b95f2;font-size:8.25px;">领料满足</div>
<div class="r" style="left:251.20px;top:566.95px;width:7.60px;height:7.50px;background:#fff;border:1px solid #cbcccf;box-sizing:border-box;border-radius:1px;"></div>
<div class="t" style="left:276.70px;top:565.60px;color:#363636;font-size:8.25px;">5</div>
<div class="t" style="left:305.20px;top:565.60px;color:#363636;font-size:8.5px;">WLBM005</div>
<div class="t" style="left:373.00px;top:565.60px;color:#363636;font-size:8.25px;">部件1</div>
<div class="t" style="left:429.30px;top:565.60px;color:#363636;font-size:8.25px;">自制</div>
<div class="t" style="left:496.10px;top:565.60px;color:#363636;font-size:8.25px;">20</div>
<div class="t" style="left:563.50px;top:565.60px;color:#363636;font-size:8.25px;">10</div>
<div class="t" style="left:625.20px;top:565.60px;color:#363636;font-size:8.25px;">10</div>
<div class="t" style="left:694.30px;top:565.60px;color:#363636;font-size:8.25px;">0</div>
<div class="t" style="left:756.20px;top:565.60px;color:#4d89f2;font-size:8.25px;">0</div>
<div class="t" style="left:812.70px;top:565.60px;color:#363636;font-size:8.25px;">10</div>
<div class="r" style="left:883.00px;top:562.70px;width:39.50px;height:16.00px;background:#e9e9e9;border-radius:2.5px;"></div>
<div class="t" style="left:883.00px;width:39.50px;text-align:center;top:565.45px;color:#9a9a9a;font-size:8.25px;">外购满足</div>
</body></html>
